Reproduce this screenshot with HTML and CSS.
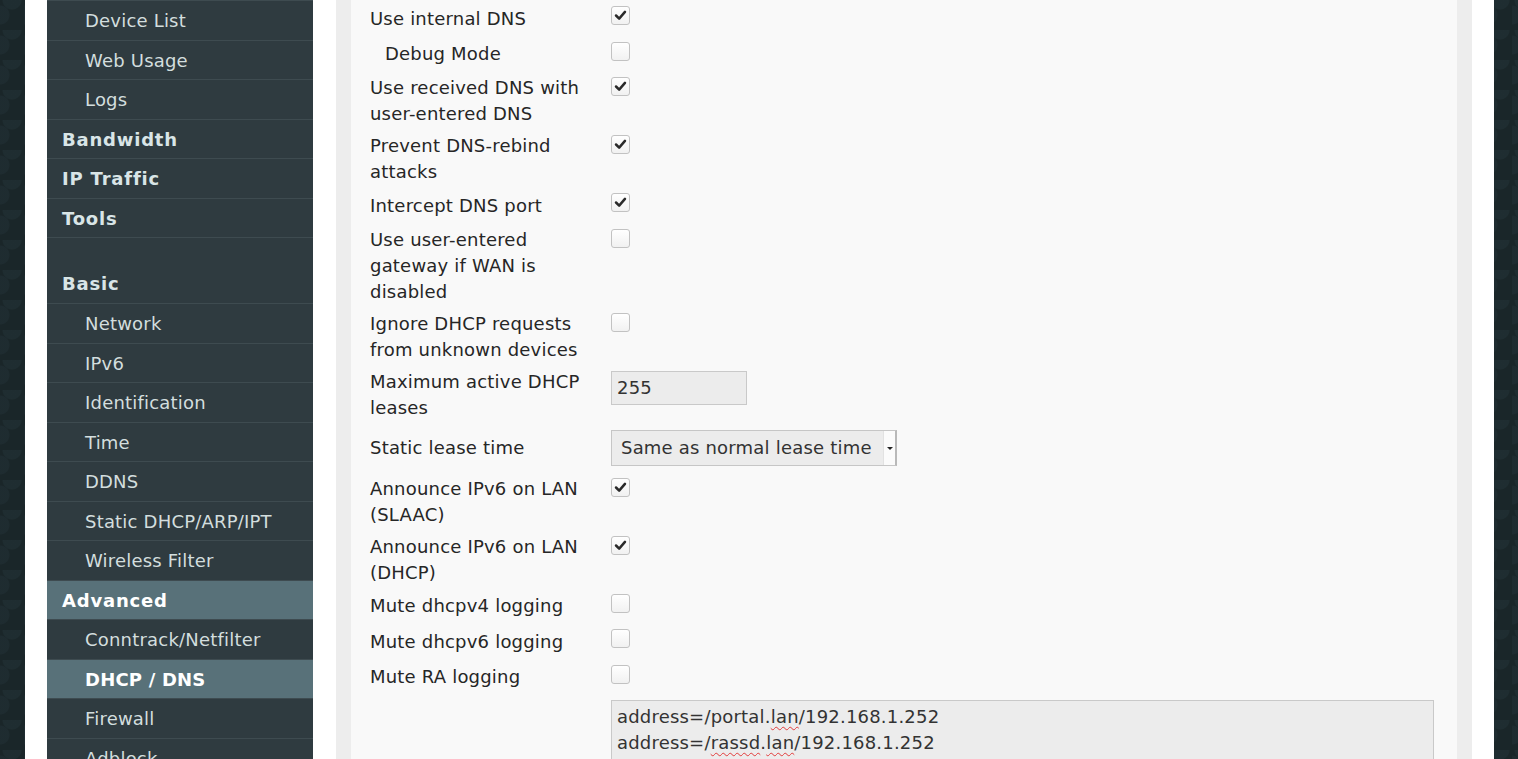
FILE: index.html
```html
<!DOCTYPE html>
<html lang="en">
<head>
<meta charset="utf-8">
<title>Advanced: DHCP / DNS</title>
<link rel="stylesheet" href="styles.css">
</head>
<body>
<div class="frame">
  <nav class="sidebar">
    <a class="nav sub">Device List</a>
    <a class="nav sub">Web Usage</a>
    <a class="nav sub">Logs</a>
    <a class="nav head">Bandwidth</a>
    <a class="nav head">IP Traffic</a>
    <a class="nav head">Tools</a>
    <div class="nav-spacer"></div>
    <a class="nav head noline">Basic</a>
    <a class="nav sub">Network</a>
    <a class="nav sub">IPv6</a>
    <a class="nav sub">Identification</a>
    <a class="nav sub">Time</a>
    <a class="nav sub">DDNS</a>
    <a class="nav sub">Static DHCP/ARP/IPT</a>
    <a class="nav sub">Wireless Filter</a>
    <a class="nav head active">Advanced</a>
    <a class="nav sub">Conntrack/Netfilter</a>
    <a class="nav sub current">DHCP / DNS</a>
    <a class="nav sub">Firewall</a>
    <a class="nav sub">Adblock</a>
    <a class="nav sub">MAC Address</a>
    <a class="nav sub">Miscellaneous</a>
  </nav>

  <main class="panel">
    <div class="form">
      <div class="row">
        <div class="label">Use internal DNS</div>
        <div class="field"><span class="cb on"><svg viewBox="0 0 19 19"><path d="M4.5 9.5 L8 13 L14.5 5.5"/></svg></span></div>
      </div>
      <div class="row">
        <div class="label indent">Debug Mode</div>
        <div class="field"><span class="cb"></span></div>
      </div>
      <div class="row">
        <div class="label">Use received DNS with user-entered DNS</div>
        <div class="field"><span class="cb on"><svg viewBox="0 0 19 19"><path d="M4.5 9.5 L8 13 L14.5 5.5"/></svg></span></div>
      </div>
      <div class="row">
        <div class="label">Prevent DNS-rebind attacks</div>
        <div class="field"><span class="cb on"><svg viewBox="0 0 19 19"><path d="M4.5 9.5 L8 13 L14.5 5.5"/></svg></span></div>
      </div>
      <div class="row">
        <div class="label">Intercept DNS port</div>
        <div class="field"><span class="cb on"><svg viewBox="0 0 19 19"><path d="M4.5 9.5 L8 13 L14.5 5.5"/></svg></span></div>
      </div>
      <div class="row">
        <div class="label">Use user-entered gateway if WAN is disabled</div>
        <div class="field"><span class="cb"></span></div>
      </div>
      <div class="row">
        <div class="label">Ignore DHCP requests from unknown devices</div>
        <div class="field"><span class="cb"></span></div>
      </div>
      <div class="row">
        <div class="label">Maximum active DHCP leases</div>
        <div class="field"><div class="input">255</div></div>
      </div>
      <div class="row">
        <div class="label">Static lease time</div>
        <div class="field"><div class="select"><span class="sel-text">Same as normal lease time</span><span class="sel-arrow"></span></div></div>
      </div>
      <div class="row">
        <div class="label">Announce IPv6 on LAN (SLAAC)</div>
        <div class="field"><span class="cb on"><svg viewBox="0 0 19 19"><path d="M4.5 9.5 L8 13 L14.5 5.5"/></svg></span></div>
      </div>
      <div class="row">
        <div class="label">Announce IPv6 on LAN (DHCP)</div>
        <div class="field"><span class="cb on"><svg viewBox="0 0 19 19"><path d="M4.5 9.5 L8 13 L14.5 5.5"/></svg></span></div>
      </div>
      <div class="row">
        <div class="label">Mute dhcpv4 logging</div>
        <div class="field"><span class="cb"></span></div>
      </div>
      <div class="row">
        <div class="label">Mute dhcpv6 logging</div>
        <div class="field"><span class="cb"></span></div>
      </div>
      <div class="row">
        <div class="label">Mute RA logging</div>
        <div class="field"><span class="cb"></span></div>
      </div>
      <div class="row">
        <div class="label"></div>
        <div class="field"><div class="textarea"><div class="line">address=/portal.<span class="sp">lan</span>/192.168.1.252</div><div class="line">address=/<span class="sp">rassd</span>.<span class="sp">lan</span>/192.168.1.252</div></div></div>
      </div>
    </div>
  </main>
</div>
</body>
</html>
```

FILE: styles.css
```css
html, body {
  margin: 0;
  padding: 0;
}

body {
  background-color: #1a2629;
  background-image:
    radial-gradient(circle at 50% 0%, rgba(36, 52, 58, 0.5) 0 9px, transparent 10px),
    radial-gradient(circle at 0% 50%, rgba(36, 52, 58, 0.4) 0 9px, transparent 10px);
  background-size: 24px 30px;
  font-family: "DejaVu Sans", Verdana, sans-serif;
  font-size: 18px;
  letter-spacing: 0.2px;
  color: #262626;
  overflow: hidden;
}

.frame {
  margin: 0 24px 0 25px;
  background: #ffffff;
  display: flex;
  align-items: stretch;
  gap: 23px;
  padding: 0 22px;
  min-height: 1100px;
}

/* ---------- sidebar ---------- */
.sidebar {
  width: 266px;
  flex: none;
  background: #2f3b40;
  display: flex;
  flex-direction: column;
  align-self: flex-start;
}

.nav {
  display: flex;
  align-items: center;
  height: 37.5px;
  padding-top: 1px;
  border-top: 1px solid #3e4b50;
  color: #d3dede;
  text-decoration: none;
  white-space: nowrap;
}

.nav.sub {
  padding-left: 38px;
}

.nav.head {
  padding-left: 15px;
  font-weight: bold;
  letter-spacing: 0.8px;
  color: #d9e5e7;
}

.nav.noline {
  border-top: none;
  height: 38.5px;
}

.nav-spacer {
  height: 25.5px;
  border-top: 1px solid #3e4b50;
}

.nav.active {
  background: #587179;
  color: #ffffff;
}

.nav.current {
  background: #587179;
  color: #ffffff;
  font-weight: bold;
}

/* ---------- content panel ---------- */
.panel {
  flex: 1;
  background: #f9f9f9;
  border-left: 15px solid #ededed;
  border-right: 15px solid #ededed;
  padding: 1px 23px 0 19px;
}

.row {
  display: grid;
  grid-template-columns: 241px 1fr;
  padding: 3px 0;
}

.label {
  align-self: center;
  line-height: 26px;
  padding-right: 18px;
}

.label.indent {
  padding-left: 15px;
}

.field {
  align-self: start;
  display: flex;
  align-items: flex-start;
}

.cb {
  width: 19px;
  height: 19px;
  box-sizing: border-box;
  border: 1px solid #c2c2c2;
  border-radius: 3px;
  background: linear-gradient(#ffffff, #f1f1f1);
  margin: 2px 0 8.5px;
  display: block;
}

.cb svg {
  display: block;
  width: 17px;
  height: 17px;
}

.cb path {
  fill: none;
  stroke: #2a2a2a;
  stroke-width: 2.8;
  stroke-linecap: round;
  stroke-linejoin: round;
}

.input {
  width: 136px;
  height: 34px;
  box-sizing: border-box;
  margin-top: 2px;
  border: 1px solid #c9c9c9;
  background: #ececec;
  padding: 0 5px;
  line-height: 32px;
  color: #333;
}

.select {
  width: 286px;
  height: 36px;
  box-sizing: border-box;
  margin: 3px 0 4px;
  border: 1px solid #c6c6c6;
  border-right: 2px solid #b9b9b9;
  background: #ececec;
  display: flex;
  align-items: stretch;
}

.sel-text {
  flex: 1;
  padding-left: 9px;
  line-height: 34px;
  color: #333;
  white-space: nowrap;
  overflow: hidden;
}

.sel-arrow {
  width: 11px;
  background: #fbfbfb;
  border-left: 1px solid #e2e2e2;
  position: relative;
}

.sel-arrow::after {
  content: "";
  position: absolute;
  left: 3px;
  top: 16px;
  border-left: 3px solid transparent;
  border-right: 3px solid transparent;
  border-top: 3px solid #222;
}

.textarea {
  width: 100%;
  height: 120px;
  box-sizing: border-box;
  margin-top: 2px;
  border: 1px solid #c9c9c9;
  background: #ececec;
  padding: 3px 5px;
  line-height: 26px;
  white-space: nowrap;
  color: #333;
}

.sp {
  text-decoration: underline wavy #e23b3b;
  text-decoration-thickness: 1px;
  text-underline-offset: 3px;
}
```
